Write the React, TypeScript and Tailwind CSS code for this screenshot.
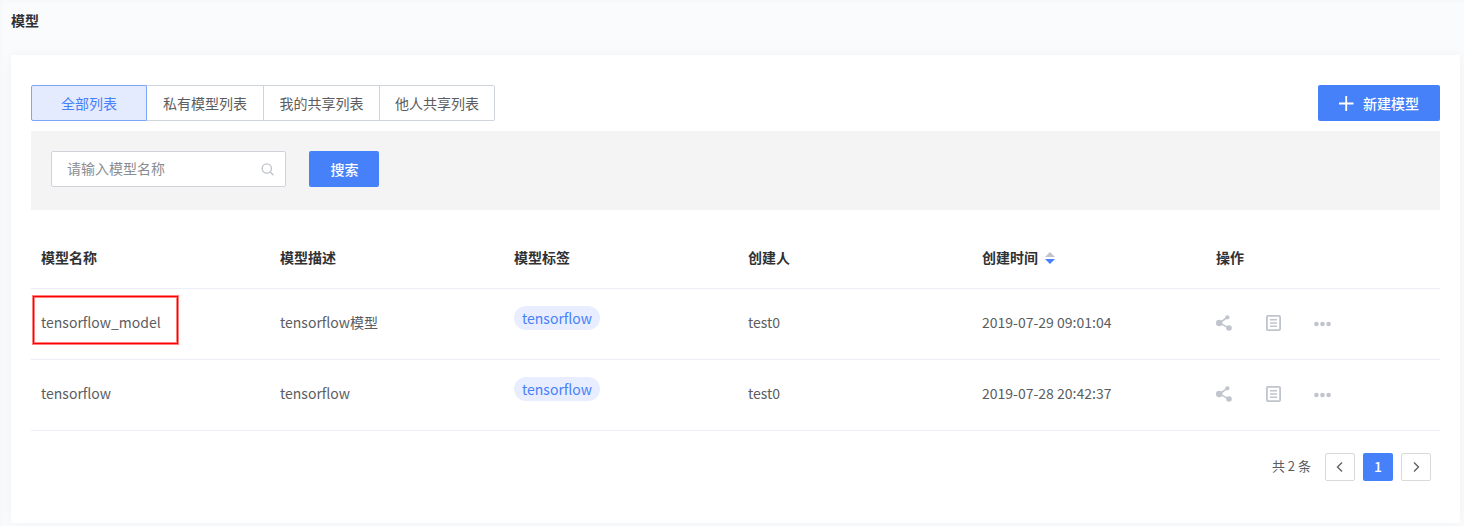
import React from "react";

const tabs = [
  { label: "全部列表", cls: "w-[116px] rounded-l-[2px] border-[#7da6fb] bg-[#e5ebff] text-[#4781f9]" },
  { label: "私有模型列表", cls: "w-[117px] border-l-0 border-[#cfd3da]" },
  { label: "我的共享列表", cls: "w-[116px] border-l-0 border-[#cfd3da]" },
  { label: "他人共享列表", cls: "w-[115px] rounded-r-[2px] border-l-0 border-[#cfd3da]" },
];

const rows = [
  { name: "tensorflow_model", desc: "tensorflow模型", tag: "tensorflow", owner: "test0", time: "2019-07-29 09:01:04", marked: true },
  { name: "tensorflow", desc: "tensorflow", tag: "tensorflow", owner: "test0", time: "2019-07-28 20:42:37", marked: false },
];

const columns = "grid grid-cols-[239px_234px_234px_234px_234px_1fr] pl-[10px]";

function ShareIcon() {
  return (
    <svg width="16" height="16" viewBox="0 0 16 16" className="text-[#c0c4cc]">
      <path d="M11.3 2.4 3.4 8l9.4 4.9" fill="none" stroke="currentColor" strokeWidth="1.6" />
      <circle cx="3.2" cy="8" r="3.2" fill="currentColor" />
      <circle cx="11.4" cy="2.3" r="2.1" fill="currentColor" />
      <circle cx="13" cy="13" r="2.8" fill="currentColor" />
    </svg>
  );
}

function DocIcon() {
  return (
    <svg width="15" height="16" viewBox="0 0 15 16" fill="none" stroke="#c0c4cc">
      <rect x="0.9" y="0.9" width="13.2" height="14.2" rx="1" strokeWidth="1.8" />
      <path d="M4 4.8h7M4 8h7M4 11.2h7" strokeWidth="1.5" />
    </svg>
  );
}

function DotsIcon() {
  return (
    <svg width="17" height="6" viewBox="0 0 17 6" fill="#c0c4cc">
      <circle cx="2.4" cy="3" r="2.3" />
      <circle cx="8.5" cy="3" r="2.3" />
      <circle cx="14.6" cy="3" r="2.3" />
    </svg>
  );
}

function PageArrow({ d }: { d: string }) {
  return (
    <button className="flex h-7 w-[30px] items-center justify-center rounded-[2px] border border-[#d9d9d9] bg-white pb-px">
      <svg width="12" height="12" viewBox="0 0 12 12" fill="none" stroke="#5f6266" strokeWidth="1.4">
        <path d={d} />
      </svg>
    </button>
  );
}

export default function App() {
  return (
    <div className="h-[526px] w-[1464px] overflow-hidden bg-[#fafbfd] pl-[11px] font-['Noto_Sans_CJK_SC',sans-serif] text-sm text-[#5a5d61] shadow-[inset_2px_2px_4px_rgba(0,0,0,0.02)]">
      <header className="flex h-[55px] pt-[10px] leading-5">
        <h1 className="font-bold text-[#303133]">模型</h1>
      </header>

      <main className="flex h-[468px] w-[1449px] flex-col rounded-[2px] bg-white px-5 pt-[30px] shadow-[0_0_12px_rgba(0,0,0,0.045)]">
        <div className="flex w-[1409px] justify-between">
          <div className="flex">
            {tabs.map((t) => (
              <button key={t.label} className={`flex h-9 items-center justify-center border ${t.cls}`}>
                {t.label}
              </button>
            ))}
          </div>
          <button className="flex h-9 w-[122px] items-center rounded-[2px] bg-[#4781f9] pl-[21px] font-medium text-white">
            <svg width="15" height="15" viewBox="0 0 15 15" stroke="currentColor" strokeWidth="1.8" className="mt-px">
              <path d="M7.2 0v15M0 7.5h14.5" />
            </svg>
            <span className="ml-[9px]">新建模型</span>
          </button>
        </div>

        <div className="mt-[10px] flex h-[79px] w-[1409px] bg-[#f4f4f4] pl-5 pt-5">
          <div className="flex h-9 w-[235px] items-center justify-between rounded-[2px] border border-[#d0d3d9] bg-white pl-[15px] pr-[11px] text-[#8a8d92]">
            <span className="pb-0.5">请输入模型名称</span>
            <svg width="13" height="13" viewBox="0 0 13 13" fill="none" stroke="#c0c4cc" strokeWidth="1.4">
              <circle cx="5.8" cy="5.5" r="4.6" />
              <path d="m9.2 9 3.3 3.3" />
            </svg>
          </div>
          <button className="ml-[23px] flex h-9 w-[70px] items-center justify-center rounded-[2px] bg-[#4781f9] pl-px font-medium text-white">
            搜索
          </button>
        </div>

        <div className="mt-[18px] w-[1409px]">
          <div className={`${columns} h-[61px] items-center border-b border-[#ebeef5] pb-0.5 font-bold text-[#303133]`}>
            <span>模型名称</span>
            <span>模型描述</span>
            <span>模型标签</span>
            <span>创建人</span>
            <span className="flex items-center">
              创建时间
              <svg width="10" height="12" viewBox="0 0 10 12" className="ml-[7px] mt-0.5">
                <path d="M0 5 5 0l5 5z" fill="#c0c4cc" />
                <path d="m0 7 5 5 5-5z" fill="#4781f9" />
              </svg>
            </span>
            <span>操作</span>
          </div>
          {rows.map((r) => (
            <div key={r.name} className={`${columns} relative h-[71px] items-center border-b border-[#ebeef5] pb-1`}>
              {r.marked && (
                <div className="absolute left-[2px] top-[7px] h-12 w-[145px] border border-[#ff0000] shadow-[0_0_0_1px_rgba(255,0,0,0.5),inset_0_0_0_1px_rgba(255,0,0,0.5)]" />
              )}
              <span>{r.name}</span>
              <span>{r.desc}</span>
              <span className="mb-2 flex h-6 w-[86px] items-center justify-center rounded-full bg-[#e8eeff] text-[#4781f9]">
                {r.tag}
              </span>
              <span>{r.owner}</span>
              <span>{r.time}</span>
              <span className="flex items-center pt-0.5">
                <ShareIcon />
                <span className="ml-[34px]"><DocIcon /></span>
                <span className="ml-[33px] pt-0.5"><DotsIcon /></span>
              </span>
            </div>
          ))}
        </div>

        <div className="mt-[22px] flex w-[1400px] items-center justify-end gap-2">
          <span className="mr-[6px] pb-0.5 text-[13px] leading-[26px]">共 2 条</span>
          <PageArrow d="M8 1.5 3.5 6 8 10.5" />
          <button className="flex h-7 w-[30px] items-center justify-center rounded-[2px] bg-[#4781f9] pb-0.5 font-medium text-white">1</button>
          <PageArrow d="M4 1.5 8.5 6 4 10.5" />
        </div>
      </main>
    </div>
  );
}
